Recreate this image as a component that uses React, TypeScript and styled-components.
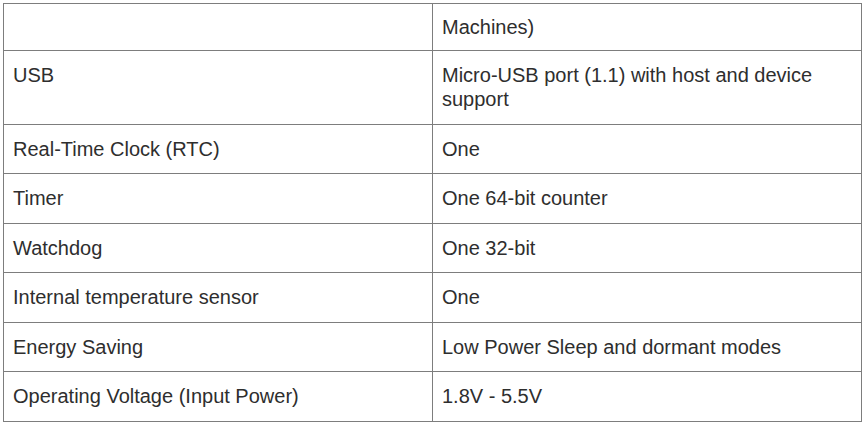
import { FC } from "react";
import styled, { createGlobalStyle } from "styled-components";

/**
 * Styles
 */

const GlobalStyle = createGlobalStyle`
  html, body {
    margin: 0;
    padding: 0;
    background: #ffffff;
  }

  body {
    font-family: "Liberation Sans", Arial, sans-serif;
    color: #2e2e2e;
  }
`;

const Page = styled.main`
  padding: 3px 0 0 3px;
`;

const SpecTable = styled.table`
  width: 859px;
  border-collapse: collapse;
  table-layout: fixed;
  font-size: 20px;
  line-height: 24.5px;
`;

const Cell = styled.td<{ $tight?: boolean }>`
  width: 50%;
  border: 1px solid #7d7d7d;
  padding: ${({ $tight }) => ($tight ? "11px 9px 10px" : "12px 9px")};
  vertical-align: top;
  text-align: left;
`;

/**
 * Data
 */

const specs: [string, string][] = [
  ["USB", "Micro-USB port (1.1) with host and device support"],
  ["Real-Time Clock (RTC)", "One"],
  ["Timer", "One 64-bit counter"],
  ["Watchdog", "One 32-bit"],
  ["Internal temperature sensor", "One"],
  ["Energy Saving", "Low Power Sleep and dormant modes"],
  ["Operating Voltage (Input Power)", "1.8V - 5.5V"],
];

/**
 * Component
 */

const App: FC = () => {
  return (
    <>
      <GlobalStyle />
      <Page>
        <SpecTable>
          <tbody>
            <tr>
              <Cell $tight />
              <Cell $tight>Machines)</Cell>
            </tr>
            {specs.map(([name, value]) => (
              <tr key={name}>
                <Cell>{name}</Cell>
                <Cell>{value}</Cell>
              </tr>
            ))}
          </tbody>
        </SpecTable>
      </Page>
    </>
  );
};

export default App;
